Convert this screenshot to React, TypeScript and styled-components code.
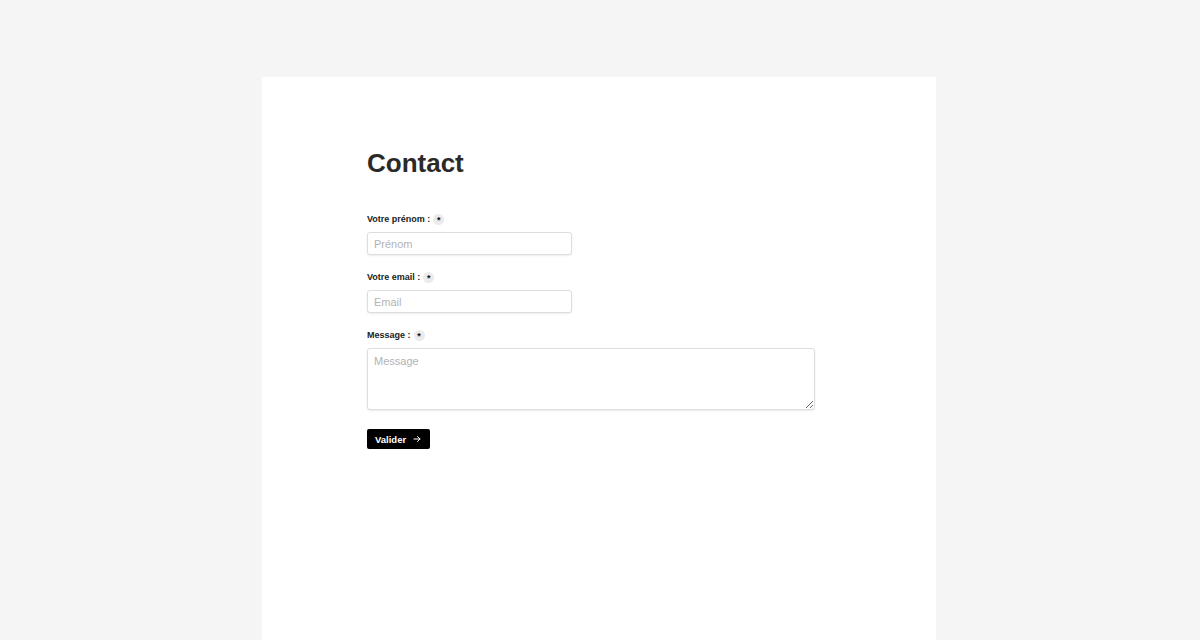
import React from 'react';
import styled, { createGlobalStyle } from 'styled-components';

const GlobalStyle = createGlobalStyle`
  html, body {
    margin: 0;
    padding: 0;
    background: #f5f5f5;
    font-family: 'Liberation Sans', Arial, sans-serif;
    color: #2b2b2b;
  }
`;

const Page = styled.div`
  height: 640px;
  box-sizing: border-box;
  padding: 77px 2px 0 0;
  display: flex;
  justify-content: center;
  overflow: hidden;
`;

const Card = styled.main`
  width: 674px;
  height: 100%;
  background: #fff;
  box-sizing: border-box;
  padding: 70px 105px 0 105px;
`;

const Title = styled.h1`
  margin: 0 0 34px 0;
  font-size: 26px;
  line-height: 32px;
  font-weight: 700;
  color: #2b2a28;
`;

const Form = styled.form`
  display: flex;
  flex-direction: column;
`;

const Field = styled.div`
  display: flex;
  flex-direction: column;
  gap: 7px;
  margin-bottom: 16px;
`;

const Label = styled.label`
  display: flex;
  align-items: center;
  gap: 3px;
  font-size: 9px;
  line-height: 12px;
  font-weight: 700;
  color: #222;
`;

const Required = styled.span`
  display: inline-flex;
  align-items: center;
  justify-content: center;
  width: 11px;
  height: 11px;
  border-radius: 50%;
  background: #ebebeb;
  font-size: 9px;
  font-weight: 700;
  line-height: 1;
  color: #111;
  padding-top: 3px;
  box-sizing: border-box;
`;

const Input = styled.input<{ $width?: number }>`
  width: ${(p) => p.$width ?? 205}px;
  height: 23px;
  box-sizing: border-box;
  border: 1px solid #dedede;
  border-radius: 3px;
  box-shadow: 0 1px 2px rgba(0, 0, 0, 0.08);
  padding: 0 6px;
  font-family: inherit;
  font-size: 11px;
  color: #333;
  outline: none;
  &::placeholder {
    color: #b3b3b3;
  }
`;

const TextArea = styled.textarea`
  width: 448px;
  height: 62px;
  box-sizing: border-box;
  border: 1px solid #dedede;
  border-radius: 3px;
  box-shadow: 0 1px 2px rgba(0, 0, 0, 0.08);
  padding: 6px;
  font-family: inherit;
  font-size: 11px;
  color: #333;
  outline: none;
  resize: vertical;
  &::placeholder {
    color: #b3b3b3;
  }
`;

const Submit = styled.button`
  align-self: flex-start;
  margin-top: 3px;
  display: inline-flex;
  align-items: center;
  gap: 7px;
  height: 20px;
  padding: 0 9px 0 8px;
  background: #000;
  color: #fff;
  border: none;
  border-radius: 2px;
  font-family: inherit;
  font-size: 9.5px;
  font-weight: 700;
  cursor: pointer;
`;

const Arrow = () => (
  <svg width="8" height="8" viewBox="0 0 8 8" fill="none" stroke="#fff" strokeWidth="1" strokeLinecap="round">
    <path d="M1 4h6M4.5 1.5L7 4 4.5 6.5" />
  </svg>
);

export default function App() {
  return (
    <>
      <GlobalStyle />
      <Page>
        <Card>
          <Title>Contact</Title>
          <Form onSubmit={(e) => e.preventDefault()}>
            <Field>
              <Label>
                Votre prénom : <Required>*</Required>
              </Label>
              <Input placeholder="Prénom" />
            </Field>
            <Field>
              <Label>
                Votre email : <Required>*</Required>
              </Label>
              <Input placeholder="Email" />
            </Field>
            <Field>
              <Label>
                Message : <Required>*</Required>
              </Label>
              <TextArea placeholder="Message" />
            </Field>
            <Submit type="submit">
              Valider <Arrow />
            </Submit>
          </Form>
        </Card>
      </Page>
    </>
  );
}
